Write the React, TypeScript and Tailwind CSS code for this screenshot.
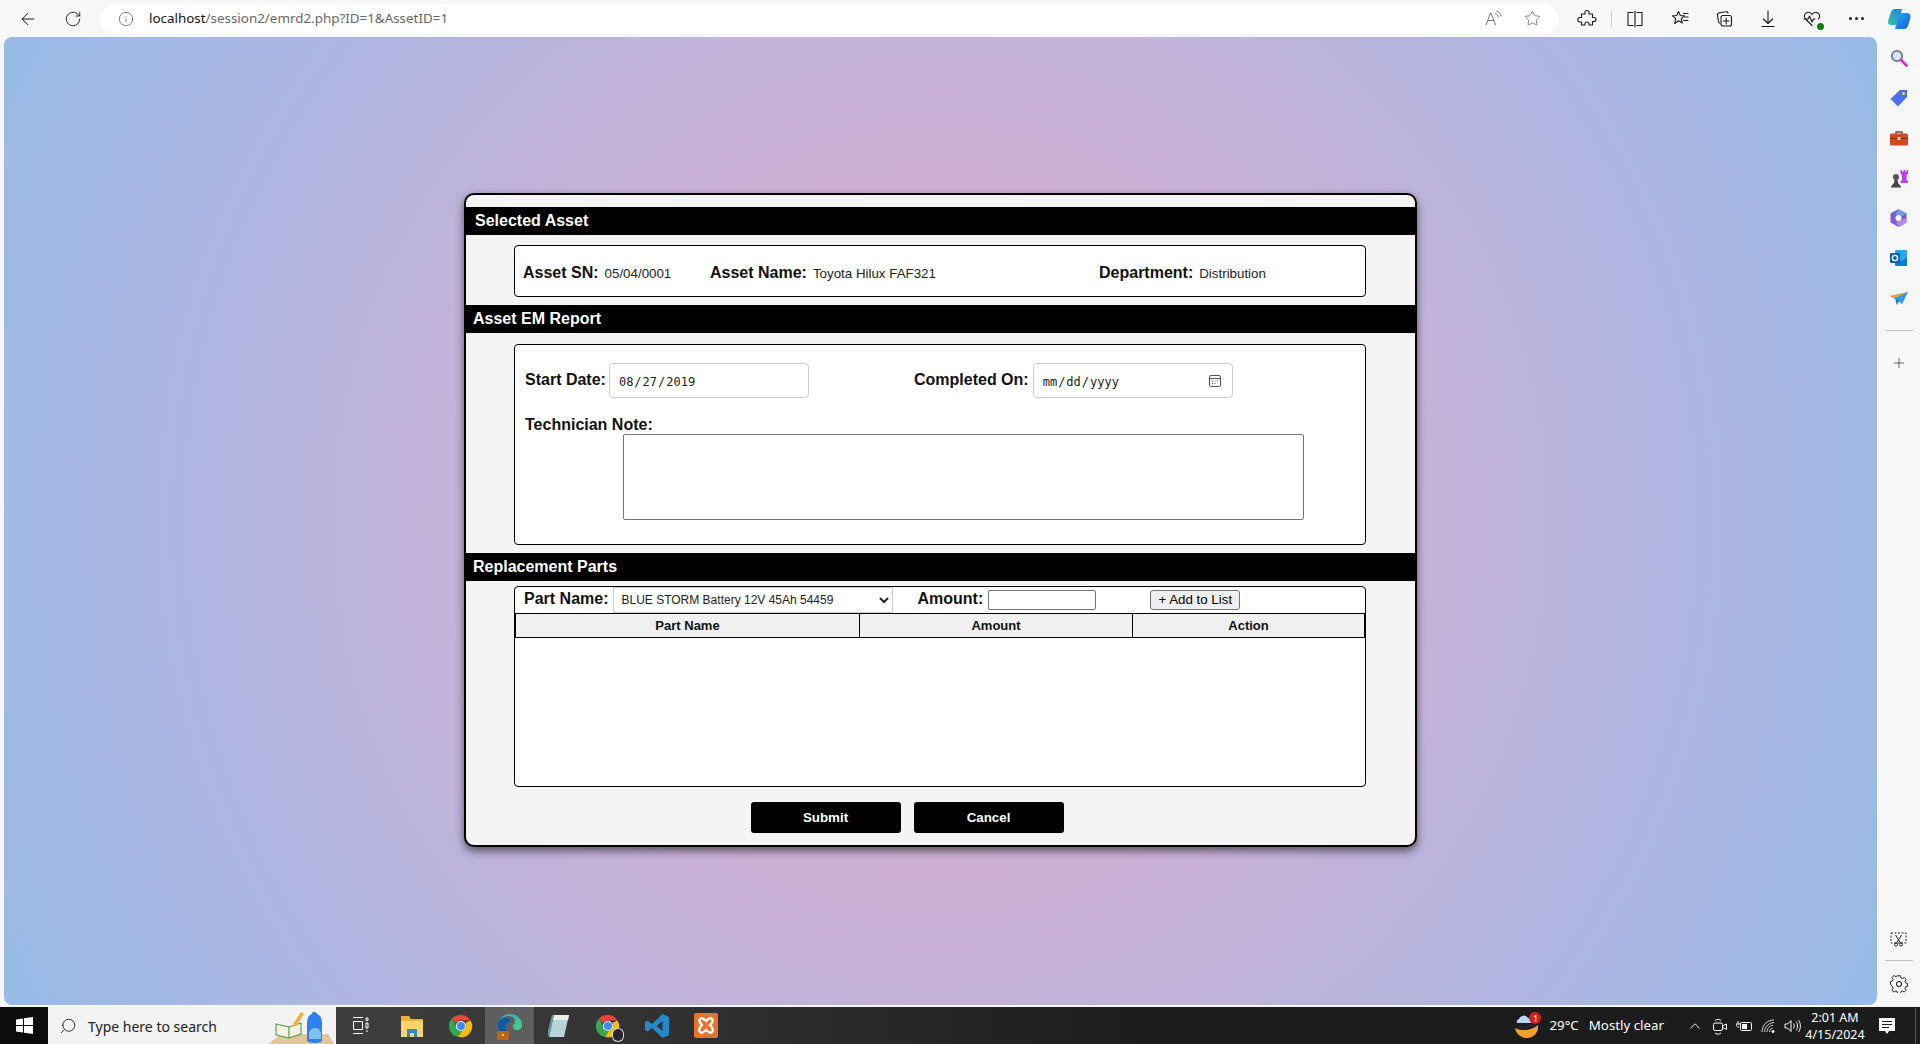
import React from "react";
import { ArrowLeft, RotateCw, Info, Star, Plus, Search, ChevronUp } from "lucide-react";

const S = ({ s = 20, c, children }: { s?: number; c?: string; children: React.ReactNode }) => (
  <svg width={s} height={s} viewBox="0 0 20 20" fill="none" stroke="#1a1a1a" strokeWidth="1.1" strokeLinecap="round" strokeLinejoin="round" className={c}>
    {children}
  </svg>
);

const Tb = ({ w = 44, children }: { w?: number; children: React.ReactNode }) => (
  <div className="flex h-full shrink-0 items-center justify-center" style={{ width: w }}>{children}</div>
);

const Side = ({ children }: { children: React.ReactNode }) => (
  <div className="flex h-[40px] w-full shrink-0 items-center justify-center">{children}</div>
);

function TopBar() {
  return (
    <div className="flex h-[37px] w-full shrink-0 items-center bg-[#f7f7f7]">
      <Tb w={55}><ArrowLeft size={20} strokeWidth={1.2} color="#1a1a1a" /></Tb>
      <Tb w={36}><RotateCw size={18} strokeWidth={1.2} color="#1a1a1a" /></Tb>
      <div className="ml-[9px] flex h-[30px] w-[1458px] shrink-0 items-center rounded-[15px] bg-white pl-[18px] pr-[12px]">
        <Info size={16} strokeWidth={1.1} color="#555" />
        <span className="ml-[15px] whitespace-nowrap font-['Noto_Sans',sans-serif] text-[13.4px] text-[#666]">
          <span className="text-[#111]">localhost</span>/session2/emrd2.php?ID=1&amp;AssetID=1
        </span>
        <div className="ml-auto flex items-center gap-[22px] pr-[5px]">
          <svg width="17" height="17" viewBox="0 0 17 17" fill="none" stroke="#777" strokeWidth="1"><path d="M1 15 5.500 3h.5L10.500 15M2.800 10.500h6.600" /><path d="M10 3.500c2 .7 3 2 3.200 4M11.500 1c2.700 1 4.300 3 4.500 5.500" /></svg>
          <Star size={17} strokeWidth={1.1} color="#666" />
        </div>
      </div>
      <div className="ml-[14px]" />
      <Tb w={30}><S><path d="M8 3.500a2 2 0 0 1 4 0V5h3.500v3.500H17a2 2 0 0 1 0 4h-1.500V16H12v-1a2 2 0 0 0-4 0v1H4.500v-3H3a2 2 0 0 1 0-4.500h1.500V5H8z" /></S></Tb>
      <div className="ml-[9px] h-[16px] w-px bg-[#ccc]" />
      <Tb w={46}><S><path d="M8 3.500H3v13h5M12 3.500h5v13h-5M10 2v16" /></S></Tb>
      <Tb w={44}><S><path d="M8.500 2.500l1.800 4 4.200.4-3.200 2.800 1 4.300-3.800-2.300-3.800 2.800 1-4.800-3.200-2.800 4.200-.4zM13.500 4.500H18M15 8h3M13.500 11.500H18" /></S></Tb>
      <Tb w={44}><S><rect x="7" y="6.500" width="10.500" height="10.500" rx="2" /><path d="M12.200 9v6M9.200 12h6M14 4c-.3-1-1-1.500-2-1.300l-6.500 1C4 4 3.200 5 3.500 6.500l1 6c.1.800.5 1.300 1 1.500" /></S></Tb>
      <Tb w={44}><S><path d="M10 2v12M5.500 10l4.500 4.500 4.500-4.500M4 17.500h12" /></S></Tb>
      <Tb w={44}>
        <div className="relative">
          <S><path d="M10 16.500 3.500 10C1.500 8 2 4.500 5 3.500c2-.6 4 .2 5 2 1-1.800 3-2.600 5-2 3 1 3.500 4.500 1.500 6.500M2 10h4l1.500-3 2.500 6 1.500-3h1.500" /></S>
          <span className="absolute bottom-[-1px] right-[-2px] h-[7px] w-[7px] rounded-full bg-[#107c10]" />
        </div>
      </Tb>
      <Tb w={44}><div className="flex gap-[3px]"><i className="h-[3px] w-[3px] rounded-full bg-[#222]" /><i className="h-[3px] w-[3px] rounded-full bg-[#222]" /><i className="h-[3px] w-[3px] rounded-full bg-[#222]" /></div></Tb>
      <Tb w={42}>
        <svg width="25" height="24" viewBox="0 0 25 24">
          <defs>
            <linearGradient id="cp1" x1="0" y1="1" x2="1" y2="0"><stop offset="0" stopColor="#37c8a0" /><stop offset="1" stopColor="#1d7fe0" /></linearGradient>
            <linearGradient id="cp2" x1="0" y1="0" x2="1" y2="1"><stop offset="0" stopColor="#2aa6f0" /><stop offset="1" stopColor="#1460d8" /></linearGradient>
          </defs>
          <path d="M8 2h7l-4 13c-.6 2-1.400 3-3 3H4C1.500 18 .5 16 1.200 13.500L4 5c.6-2 2-3 4-3z" fill="url(#cp1)" />
          <path d="M14 22H8l4-13c.6-2 1.500-3 3-3h5c2 0 4 2 3.600 4.500L21 19c-.6 2-2.500 3-4 3z" fill="url(#cp2)" />
        </svg>
      </Tb>
    </div>
  );
}

function Sidebar() {
  return (
    <div className="flex w-[43px] shrink-0 flex-col items-center bg-[#f7f7f7] pt-[1px]">
      <Side>
        <svg width="18" height="18" viewBox="0 0 18 18"><circle cx="7" cy="7" r="5.200" fill="#d6e8f5" stroke="#6d7a86" strokeWidth="1.800" /><path d="M11 11l5.500 5.500" stroke="#d42bd8" strokeWidth="2.600" strokeLinecap="round" /></svg>
      </Side>
      <Side>
        <svg width="18" height="18" viewBox="0 0 18 18"><path d="M10 1h7v7l-9 9.500L.5 10z" fill="#4a6ff0" /><circle cx="13.500" cy="4.500" r="1.500" fill="#ffd54a" /></svg>
      </Side>
      <Side>
        <svg width="18" height="16" viewBox="0 0 18 16"><path d="M6 4V2h6v2" fill="none" stroke="#6b4a3a" strokeWidth="1.300" /><rect y="3.500" width="18" height="12" rx="1.500" fill="#cf4a1c" /><rect y="8" width="18" height="1" fill="#8c2c0c" /><rect x="7.500" y="7" width="3" height="3" fill="#d8c8c0" /></svg>
      </Side>
      <Side>
        <svg width="18" height="19" viewBox="0 0 18 19"><circle cx="6" cy="8" r="3" fill="#555" /><path d="M4.500 10.500h3L8 14l3 3.500v1H1v-1L4 14z" fill="#444" /><path d="M10.500 1h1.500v1.500h1.500V1H15v1.500h1.500V1H18v4l-1.500 1v5l1.500 1.500v1.500h-7.500v-1.500L12 11V6l-1.500-1z" fill="#c23bf0" /></svg>
      </Side>
      <Side>
        <svg width="17" height="18" viewBox="0 0 17 18"><path d="M8.500 0 16.500 4.500v9L8.500 18.000.5 13.500v-9z" fill="#7b5bd6" /><path d="M8.500 0 16.500 4.500 11 7.500 5 5z" fill="#6aa0e8" /><path d="M16.500 9v4.500L8.500 18 6 13z" fill="#b58ae0" /><circle cx="8.500" cy="9" r="3" fill="#f7f7f7" /></svg>
      </Side>
      <Side>
        <svg width="17" height="16" viewBox="0 0 17 16"><rect x="5" y="0" width="12" height="14" rx="1" fill="#28a8ea" /><path d="M5 8l6 3.500L17 8v7a1 1 0 0 1-1 1H6a1 1 0 0 1-1-1z" fill="#0f78d4" /><rect x="0" y="3" width="10" height="10" rx="1" fill="#0a5fb0" /><circle cx="5" cy="8" r="2.600" fill="none" stroke="#fff" strokeWidth="1.400" /></svg>
      </Side>
      <Side>
        <svg width="18" height="13" viewBox="0 0 18 13"><path d="M0 4 18 0 12 12 7 8z" fill="#2a9df0" /><path d="M0 4 18 0 5 6z" fill="#f2a427" /><path d="M5 6 7 13 9 9z" fill="#1474c4" /></svg>
      </Side>
      <div className="mt-[12px] h-px w-[28px] bg-[#c4c4c4]" />
      <Side><span className="mt-[23px] block"><Plus size={16} strokeWidth={1.1} color="#333" /></span></Side>
      <div className="mt-auto mb-[14px] flex w-full flex-col items-center">
        <svg width="17" height="15" viewBox="0 0 17 15" fill="none" stroke="#222" strokeWidth="1"><path d="M1 1h15v10H1z" strokeDasharray="2 1.500" /><path d="M5.500 3 10.500 11M11.500 3 6.500 11" /><circle cx="6" cy="12.500" r="1.500" /><circle cx="11" cy="12.500" r="1.500" /></svg>
        <div className="mb-[14px] mt-[13px] h-px w-[28px] bg-[#c4c4c4]" />
        <svg width="18" height="18" viewBox="0 0 18 18" fill="none" stroke="#222" strokeWidth="1.050" strokeLinejoin="round"><path d="M7.500 1h3l.5 2.200 1.500.7 2-1.200 2 2.200-1.200 2 .6 1.600 2.100.6v3l-2.100.5-.6 1.500 1.200 2-2 2.100-2-1.200-1.500.6-.5 2.200h-3l-.5-2.200-1.500-.6-2 1.200-2-2.100 1.200-2-.6-1.500L.1 10.100v-3l2.100-.6.600-1.600-1.200-2 2-2.200 2 1.200 1.500-.7z" transform="scale(.95) translate(.5 -.2)" /><circle cx="9" cy="9" r="2.500" /></svg>
      </div>
    </div>
  );
}

const Header = ({ children, pl, mt }: { children: React.ReactNode; pl: string; mt: string }) => (
  <div className={`flex h-[28px] items-center bg-black font-bold text-white text-[16px] ${pl} ${mt}`}>{children}</div>
);

const Lbl = ({ children }: { children: React.ReactNode }) => (
  <span className="whitespace-nowrap text-[16px] font-bold leading-[18px] text-[#111]">{children}</span>
);

const Val = ({ children }: { children: React.ReactNode }) => (
  <span className="whitespace-nowrap text-[13.33px] leading-[14px] text-[#222]">{children}</span>
);

function Card() {
  const dateCls = "h-[35px] w-[200px] rounded-[4px] border border-[#ccc] bg-white px-[8px] pt-[2px] font-['DejaVu_Sans_Mono',monospace] text-[12px] text-[#222] [&::-webkit-calendar-picker-indicator]:opacity-0";
  return (
    <div className="w-[953px] rounded-[10px] border-2 border-black bg-[#f4f4f4] pb-[12px] pt-[12px] font-['Liberation_Sans',Arial,sans-serif] shadow-[0_4px_8px_rgba(0,0,0,0.55)]">
      <Header pl="pl-[9px]" mt="mt-0">Selected Asset</Header>
      <div className="ml-[48px] mt-[10px] flex h-[52px] w-[852px] items-center rounded-[4px] border border-black bg-white pl-[8px] pt-[3px]">
        <div className="flex w-[187px] items-baseline gap-[6px]"><Lbl>Asset SN:</Lbl><Val>05/04/0001</Val></div>
        <div className="flex w-[389px] items-baseline gap-[6px]"><Lbl>Asset Name:</Lbl><Val>Toyota Hilux FAF321</Val></div>
        <div className="flex items-baseline gap-[6px]"><Lbl>Department:</Lbl><Val>Distribution</Val></div>
      </div>

      <Header pl="pl-[7px]" mt="mt-[8px]">Asset EM Report</Header>
      <div className="ml-[48px] mt-[11px] h-[201px] w-[852px] rounded-[4px] border border-black bg-white pl-[10px] pt-[18px]">
        <div className="flex h-[35px] items-center">
          <div className="flex w-[389px] items-center gap-[3px]">
            <span className="-mt-[2px]"><Lbl>Start Date:</Lbl></span>
            <input type="date" defaultValue="2019-08-27" className={dateCls} />
          </div>
          <div className="flex items-center gap-[4px]">
            <span className="-mt-[2px]"><Lbl>Completed On:</Lbl></span>
            <div className="relative">
              <input type="date" className={dateCls} />
              <svg width="14" height="14" viewBox="0 0 14 14" fill="none" stroke="#555" strokeWidth="1" className="pointer-events-none absolute right-[11px] top-[11px]">
                <rect x="1.500" y="1.500" width="11" height="11" rx="1.500" />
                <path d="M1.500 4.500h11" />
                <path d="M4 7h1M6.500 7h1M9 7h1M4 9.500h1M6.500 9.500h1" strokeWidth="1" />
              </svg>
            </div>
          </div>
        </div>
        <div className="mt-[15px] h-[18px]"><Lbl>Technician Note:</Lbl></div>
        <textarea className="ml-[98px] mt-[3px] block h-[86px] w-[681px] resize-none rounded-[2px] border border-[#767676] bg-white" />
      </div>

      <Header pl="pl-[7px]" mt="mt-[8px]">Replacement Parts</Header>
      <div className="ml-[48px] mt-[5px] h-[201px] w-[852px] rounded-[4px] border border-black bg-white">
        <div className="flex h-[26px] items-center pl-[9px]">
          <span className="-mt-[2px]"><Lbl>Part Name:</Lbl></span>
          <select className="ml-[5px] h-[26px] w-[280px] border border-[#ccc] bg-white pl-[3px] text-[12px] text-[#222]">
            <option>BLUE STORM Battery 12V 45Ah 54459</option>
          </select>
          <div className="-mt-[2px] ml-[24px]"><Lbl>Amount:</Lbl></div>
          <input type="text" className="ml-[5px] h-[20px] w-[108px] rounded-[2px] border border-[#767676] bg-white" />
          <button className="ml-[54px] h-[20px] w-[90px] rounded-[3px] border border-[#767676] bg-[#efefef] text-[13.33px] leading-none text-black">+ Add to List</button>
        </div>
        <div className="grid h-[25px] grid-cols-[344px_273px_1fr] border border-black bg-[#f0f0f0] text-center text-[13px] font-bold text-[#111]">
          <div className="flex items-center justify-center border-r border-black">Part Name</div>
          <div className="flex items-center justify-center border-r border-black">Amount</div>
          <div className="flex items-center justify-center">Action</div>
        </div>
      </div>

      <div className="mt-[15px] flex justify-center gap-[13px] pr-[67px]">
        <button className="h-[31px] w-[150px] rounded-[3px] bg-black text-[13.33px] font-bold text-white">Submit</button>
        <button className="h-[31px] w-[150px] rounded-[3px] bg-black text-[13.33px] font-bold text-white">Cancel</button>
      </div>
    </div>
  );
}

const Task = ({ active, children }: { active?: boolean; children: React.ReactNode }) => (
  <div className={`flex h-full w-[49px] shrink-0 items-center justify-center ${active ? "bg-[#5e5e5e]" : ""}`}>{children}</div>
);

const ChromeIcon = ({ badge }: { badge?: boolean }) => (
  <div className="relative">
    <svg width="24" height="24" viewBox="0 0 24 24">
      <path d="M12 1a11 11 0 0 1 9.500 5.500H12a5.500 5.500 0 0 0-5 3L3 4.500A11 11 0 0 1 12 1z" fill="#e8453c" />
      <path d="M3 4.500l5 8.500a5 5 0 0 0 4.500 4.300L9 23A11 11 0 0 1 3 4.500z" fill="#34a853" />
      <path d="M21.500 6.500A11 11 0 0 1 9 22.800l4-6a5.500 5.500 0 0 0 3.500-8z" fill="#fbbc05" />
      <circle cx="12" cy="12" r="5" fill="#fff" /><circle cx="12" cy="12" r="4" fill="#4285f4" />
    </svg>
    {badge && <span className="absolute bottom-[-3px] right-[-3px] h-[12px] w-[10px] rounded-full bg-[#2b2530] ring-1 ring-[#ddd]" />}
  </div>
);

function TaskBar() {
  return (
    <div className="flex h-[37px] w-full shrink-0 items-center bg-[linear-gradient(90deg,#3d3d3d_0%,#3d3d3d_20%,#1c1c1c_60%,#1c1c1c_100%)] font-['Noto_Sans',sans-serif]">
      <div className="flex h-full w-[48px] shrink-0 items-center justify-center bg-[#0c0c0c]">
        <svg width="17" height="17" viewBox="0 0 17 17" fill="#fff"><path d="M0 2.400 7 1.400V8H0zM8 1.200 17 0v8H8zM0 9h7v6.600l-7-1zM8 9h9v8L8 15.800z" /></svg>
      </div>
      <div className="flex h-full w-[288px] shrink-0 items-center bg-[#f3f3f3] pl-[11px] pt-[1px]">
        <Search size={18} strokeWidth={1.2} color="#222" className="-scale-x-100" />
        <span className="ml-[11px] whitespace-nowrap text-[14px] text-[#222]">Type here to search</span>
        <svg width="74" height="37" viewBox="0 0 74 37" className="ml-auto -mt-[1px] shrink-0">
          <path d="M6 37 20 27h46l6 10z" fill="#e2c59a" />
          <path d="M14 17 27 20v11l-13-3zM27 20l12-4v11l-12 4z" fill="#f4f1e3" stroke="#58a050" strokeWidth="1.200" />
          <path d="M31 17 39 5l3 2-8 12-4 1z" fill="#f2b33d" />
          <path d="M45 16c0-5 2-8 5-9 0-3 4-3 5 0 3 1 5 4 5 9v17c0 2-2 3-7 3s-8-1-8-3z" fill="#2d80ee" />
          <path d="M47 27c0-4 3-6 6-6s6 2 6 6v5H47z" fill="#7fc0fb" />
        </svg>
      </div>
      <Task>
        <svg width="16" height="17" viewBox="0 0 16 17" fill="none" stroke="#fff" strokeWidth="1"><path d="M0 .500h10M0 16.500h10M.5 4.500h9v8h-9zM13 1h2v2.500h-2zM13 6h2v5h-2zM13 14h2" /></svg>
      </Task>
      <div className="w-[2px] shrink-0" />
      <Task>
        <svg width="22" height="23" viewBox="0 0 22 23"><path d="M0 2h8l2 3h12v4H0z" fill="#e8b23a" /><path d="M0 7h22v16H0z" fill="#fbd46a" /><path d="M6 23v-8h10v8h-3v-4H9v4z" fill="#2b88d8" /></svg>
      </Task>
      <Task><ChromeIcon /></Task>
      <Task active>
        <div className="relative">
          <svg width="24" height="24" viewBox="0 0 24 24">
            <defs><linearGradient id="ed" x1="0" y1="0" x2="1" y2="1"><stop offset="0" stopColor="#2fa8dc" /><stop offset="1" stopColor="#45d57f" /></linearGradient></defs>
            <path d="M12 0c7 0 12 5 12 11 0 3-2 5-5 5-2 0-4-1-4-3 0-3 2-3 2-6 0-3-3-5-6-5C6 2 1 6 0 11 1 4 6 0 12 0z" fill="url(#ed)" />
            <path d="M0 11c0-5 5-8 9-7 3 .8 4 3 2 4-5 2-5 8-2 12 1 1 3 3 5 4C6 25 0 19 0 11z" fill="#0c59a4" />
          </svg>
          <svg width="12" height="11" viewBox="0 0 12 11" className="absolute bottom-[-2px] left-[-1px]"><rect y="2" width="12" height="9" rx="1" fill="#b8651f" /><path d="M4 2V0h4v2" fill="none" stroke="#5c3a1a" /><rect x="5" y="5" width="2" height="2" fill="#f2c94c" /></svg>
        </div>
      </Task>
      <Task>
        <svg width="22" height="24" viewBox="0 0 22 24"><path d="M6 1h15l-5 22H1z" fill="#b8d4d8" /><path d="M6 1h15l-1 5H5z" fill="#e8eef0" /><path d="M1 23 6 1 4 1-.5 19z" fill="#6a9ca8" /></svg>
      </Task>
      <Task><ChromeIcon badge /></Task>
      <Task>
        <svg width="24" height="24" viewBox="0 0 24 24"><path d="M17.500 0 24 3v18l-6.500 3L7 14l-4.500 3.500L0 16V8l2.500-1.500L7 10zM17.500 7 11.500 12l6 5z" fill="#2489ca" /></svg>
      </Task>
      <Task>
        <svg width="24" height="25" viewBox="0 0 24 25"><rect width="24" height="25" rx="2" fill="#e8732c" /><path d="M6 6c2-2 4 0 6 2 2-2 4-4 6-2s0 4-2 6c2 2 4 5 2 7s-4 0-6-2c-2 2-4 4-6 2s0-5 2-7c-2-2-4-4-2-6z" fill="none" stroke="#fff" strokeWidth="2.400" /></svg>
      </Task>

      <div className="ml-auto flex h-full items-center pt-[1px] text-white">
        <div className="relative h-[24px] w-[24px]">
          <svg width="24" height="24" viewBox="0 0 24 24"><path d="M0 14c5 3 14 3 23-3 1 7-4 13-11 13C6 24 1 20 0 14z" fill="#f0a030" /><path d="M2 12c3-1 12-1 18-3L22 12c-7 5-15 5-20 2z" fill="#222" /><path d="M2 9a3 3 0 0 1 2-4 5 5 0 0 1 9-1 3.500 3.500 0 0 1 3 5z" fill="#b8d8f4" /></svg>
          <span className="absolute right-[-2px] top-[-2px] flex h-[12px] w-[12px] items-center justify-center rounded-full bg-[#d42020] text-[9px] leading-none">1</span>
        </div>
        <span className="ml-[10px] whitespace-nowrap text-[13.3px]">29°C</span>
        <span className="ml-[10px] whitespace-nowrap text-[13.3px]">Mostly clear</span>
        <div className="ml-[22px] flex items-center gap-[9px]">
          <ChevronUp size={18} strokeWidth={1.2} color="#fff" />
          <svg width="14" height="17" viewBox="0 0 14 17" fill="none" stroke="#fff" strokeWidth="1"><rect x=".5" y="5" width="9" height="7.500" rx="1.500" /><path d="M9.500 8 13.500 6v5.500L9.500 9.500M2 2.500c2-1.500 4-1.500 6 0M2 15c2 1.500 4 1.500 6 0" /></svg>
          <svg width="16" height="12" viewBox="0 0 16 12" fill="none" stroke="#fff" strokeWidth="1"><rect x="4.500" y="2.500" width="11" height="8" rx="1" /><rect x="6" y="4" width="5" height="5" fill="#fff" stroke="none" /><path d="M0 4h5M2 1v3M0 4c0 2 1 3 3 3" /></svg>
          <svg width="14" height="14" viewBox="0 0 14 14" fill="none" stroke="#fff" strokeWidth="1"><path d="M1 13C1 6 6 1 13 1M3.500 13c0-5 4-9 9.500-9.500M6 13c0-3.500 2.500-6.500 6-6.500M8.500 13c0-2 1-3.500 3-3.500" opacity=".8" /><circle cx="12" cy="12.500" r="1" fill="#fff" /></svg>
          <svg width="17" height="14" viewBox="0 0 17 14" fill="none" stroke="#fff" strokeWidth="1"><path d="M1 5v4h2.500L7 12.500v-11L3.500 5zM9.500 4.500c1 1.500 1 3.500 0 5M12 2.500c2 2.500 2 6.500 0 9M14.500 1c2.500 3.500 2.500 8.500 0 12" /></svg>
        </div>
        <div className="ml-[4px] flex w-[60px] flex-col items-center text-[12.5px] leading-[17px]">
          <span className="whitespace-nowrap">2:01 AM</span>
          <span className="whitespace-nowrap">4/15/2024</span>
        </div>
        <div className="ml-[14px] flex h-full items-center">
          <svg width="16" height="16" viewBox="0 0 16 16"><path d="M0 0h16v13h-6l-2 3-2-3H0z" fill="#fff" /><path d="M3 3.500h10M3 6.500h10M3 9.500h7" stroke="#1c1c1c" /></svg>
        </div>
        <div className="ml-[20px] mr-[4px] h-full w-px bg-[#555]" />
      </div>
    </div>
  );
}

export default function App() {
  return (
    <div className="flex h-[1044px] w-[1920px] flex-col overflow-hidden bg-[#f7f7f7]">
      <TopBar />
      <div className="flex min-h-0 flex-1">
        <div className="flex min-w-0 flex-1 pb-[2px] pl-[4px]">
          <div className="flex flex-1 items-center justify-center rounded-[8px] bg-[radial-gradient(circle,#eaaacc,#97bbe8)] pb-[2px]">
            <Card />
          </div>
        </div>
        <Sidebar />
      </div>
      <TaskBar />
    </div>
  );
}
